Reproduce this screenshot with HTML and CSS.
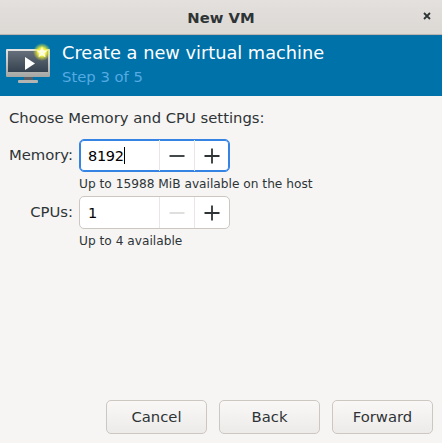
FILE: index.html
```html
<!DOCTYPE html>
<html lang="en">

<head>
    <meta charset="UTF-8">
    <title>New VM</title>
    <link rel="stylesheet" href="styles.css">
</head>

<body>
    <header class="titlebar">
        <span class="title">New VM</span>
        <span class="close">
            <svg width="8" height="8" viewBox="0 0 8 8">
                <path d="M1 1L7 7M7 1L1 7" stroke="#2e3436" stroke-width="1.8" fill="none" />
            </svg>
        </span>
    </header>

    <div class="banner">
        <svg class="vm-icon" width="50" height="48" viewBox="0 0 50 48">
            <defs>
                <radialGradient id="glow">
                    <stop offset="0.45" stop-color="#f2f23a" />
                    <stop offset="1" stop-color="#d8e030" stop-opacity="0" />
                </radialGradient>
                <linearGradient id="screen" x1="0" y1="0" x2="0" y2="1">
                    <stop offset="0" stop-color="#666f7c" />
                    <stop offset="1" stop-color="#36424f" />
                </linearGradient>
                <linearGradient id="frame" x1="0" y1="0" x2="0" y2="1">
                    <stop offset="0" stop-color="#e4e4e2" />
                    <stop offset="1" stop-color="#a5a5a3" />
                </linearGradient>
            </defs>
            <rect x="24" y="41" width="9" height="3" fill="#5a6066" />
            <rect x="18" y="44" width="20" height="3" rx="1" fill="#b4b4b2" />
            <rect x="6" y="13" width="44" height="28" rx="1" fill="url(#frame)" />
            <rect x="8" y="15" width="40" height="21" fill="url(#screen)" />
            <path d="M25 21L35 27.5L25 34Z" fill="#fff" />
            <circle cx="42" cy="16" r="9" fill="url(#glow)" />
            <path d="M42 10.5L43.7 14.2L47.6 14.6L44.7 17.3L45.5 21.2L42 19.2L38.5 21.2L39.3 17.3L36.4 14.6L40.3 14.2Z" fill="#fffde0" />
        </svg>
        <div class="banner-text">
            <div class="banner-title">Create a new virtual machine</div>
            <div class="banner-step">Step 3 of 5</div>
        </div>
    </div>

    <main class="content">
        <p class="intro">Choose Memory and CPU settings:</p>
        <div class="form">
            <label class="field-label">Memory:</label>
            <div class="spin focused">
                <div class="spin-value">8192<span class="caret"></span></div>
                <div class="spin-btn">
                    <svg width="16" height="16" viewBox="0 0 16 16"><path d="M0.5 8H15.5" stroke="#2e3436" stroke-width="1.8" /></svg>
                </div>
                <div class="spin-btn">
                    <svg width="16" height="16" viewBox="0 0 16 16"><path d="M0.5 8H15.5M8 0.5V15.5" stroke="#2e3436" stroke-width="1.8" /></svg>
                </div>
            </div>
            <div class="hint">Up to 15988 MiB available on the host</div>

            <label class="field-label">CPUs:</label>
            <div class="spin">
                <div class="spin-value">1</div>
                <div class="spin-btn">
                    <svg width="16" height="16" viewBox="0 0 16 16"><path d="M0.5 8H15.5" stroke="#dcdcda" stroke-width="1.8" /></svg>
                </div>
                <div class="spin-btn">
                    <svg width="16" height="16" viewBox="0 0 16 16"><path d="M0.5 8H15.5M8 0.5V15.5" stroke="#2e3436" stroke-width="1.8" /></svg>
                </div>
            </div>
            <div class="hint">Up to 4 available</div>
        </div>
    </main>

    <footer class="actions">
        <button type="button">Cancel</button>
        <button type="button">Back</button>
        <button type="button">Forward</button>
    </footer>
</body>

</html>
```

FILE: styles.css
```css
* {
    box-sizing: border-box;
    margin: 0;
    padding: 0;
}

html,
body {
    height: 100%;
}

body {
    display: flex;
    flex-direction: column;
    background: #f6f5f4;
    color: #2e3436;
    font-family: "DejaVu Sans", sans-serif;
    font-size: 14.8px;
}

.titlebar {
    display: flex;
    align-items: center;
    justify-content: center;
    position: relative;
    height: 35px;
    flex-shrink: 0;
    background: linear-gradient(#e3e0dd, #dcd8d4);
    border-bottom: 1px solid #b9b5b0;
}

.title {
    font-weight: bold;
}

.close {
    position: absolute;
    right: 11px;
    top: 12px;
    display: flex;
}

.banner {
    display: flex;
    align-items: flex-start;
    height: 61px;
    flex-shrink: 0;
    background: #0072aa;
    border-top: 1px solid #0c6fa3;
}

.vm-icon {
    flex-shrink: 0;
    margin-right: 12px;
}

.banner-text {
    padding-top: 6px;
}

.banner-title {
    color: #fff;
    font-size: 17.75px;
    line-height: 23px;
}

.banner-step {
    color: #55aae2;
    margin-top: 3px;
    line-height: 17px;
}

.content {
    flex: 1;
    padding: 14px 9px 0;
}

.intro {
    line-height: 16px;
    margin-bottom: 13px;
}

.form {
    display: grid;
    grid-template-columns: 70px 151px;
}

.field-label {
    align-self: center;
    justify-self: end;
    padding-right: 6px;
    position: relative;
    top: -1px;
    white-space: nowrap;
}

.spin {
    display: flex;
    height: 33px;
    background: #fff;
    border: 1px solid #cdc7c2;
    border-radius: 5px;
}

.spin.focused {
    border-color: #3584e4;
    box-shadow: inset 0 0 0 1px #3584e4;
}

.spin-value {
    flex: 1;
    display: flex;
    align-items: center;
    padding-left: 8px;
    color: #000;
    font-size: 14.5px;
    letter-spacing: -0.3px;
}

.caret {
    display: inline-block;
    width: 1px;
    height: 17px;
    background: #000;
}

.spin-btn {
    display: flex;
    align-items: center;
    justify-content: center;
    width: 35px;
    border-left: 1px solid #e9e7e5;
}

.hint {
    grid-column: 2;
    font-size: 12.2px;
    line-height: 14px;
    padding-top: 5px;
    height: 24px;
    white-space: nowrap;
}

.actions {
    display: flex;
    justify-content: flex-end;
    gap: 12px;
    padding: 0 9px 9px;
}

.actions button {
    width: 101px;
    height: 34px;
    padding-bottom: 2px;
    border: 1px solid #cdc7c2;
    border-radius: 5px;
    background: linear-gradient(#f9f8f7, #edebe9);
    color: #2e3436;
    font-family: inherit;
    font-size: 14.8px;
}
```
